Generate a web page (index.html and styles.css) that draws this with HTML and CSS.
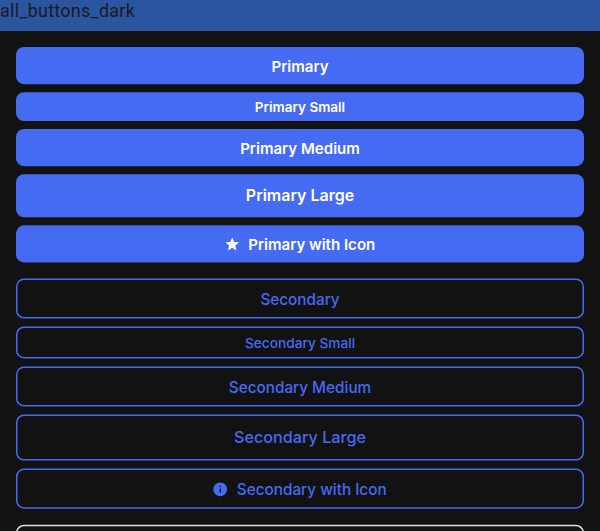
FILE: index.html
```
<!DOCTYPE html>
<html lang="en">
<head>
<meta charset="utf-8">
<title>all_buttons_dark</title>
<link rel="stylesheet" href="styles.css">
</head>
<body>
<header class="title">all_buttons_dark</header>
<main class="list" id="list">
<button class="btn primary medium"><svg class="frame"><rect x="0" y="0" width="568" height="37.15" rx="8"/></svg><span>Primary</span></button>
<button class="btn primary small"><svg class="frame"><rect x="0" y=".15" width="568" height="28.9" rx="8"/></svg><span>Primary Small</span></button>
<button class="btn primary medium"><svg class="frame"><rect x="0" y="0" width="568" height="37.15" rx="8"/></svg><span>Primary Medium</span></button>
<button class="btn primary large"><svg class="frame"><rect x="0" y=".2" width="568" height="43.1" rx="8"/></svg><span>Primary Large</span></button>
<button class="btn primary medium with-icon"><svg class="frame"><rect x="0" y=".3" width="568" height="37.15" rx="8"/></svg><svg class="icon" viewBox="0 0 24 24"><path d="M12 17.27 18.18 21l-1.64-7.03L22 9.24l-7.19-.61L12 2 9.19 8.63 2 9.24l5.46 4.73L5.82 21z"/></svg><span>Primary with Icon</span></button>
<button class="btn secondary medium first"><svg class="frame"><rect x=".75" y="1.15" width="566.5" height="38.6" rx="7.25"/></svg><span>Secondary</span></button>
<button class="btn secondary small"><svg class="frame"><rect x=".75" y="1.25" width="566.5" height="30.4" rx="7.25"/></svg><span>Secondary Small</span></button>
<button class="btn secondary medium"><svg class="frame"><rect x=".75" y="1.15" width="566.5" height="38.6" rx="7.25"/></svg><span>Secondary Medium</span></button>
<button class="btn secondary large"><svg class="frame"><rect x=".75" y="1.25" width="566.5" height="44.6" rx="7.25"/></svg><span>Secondary Large</span></button>
<button class="btn secondary medium with-icon"><svg class="frame"><rect x=".75" y="1.35" width="566.5" height="38.6" rx="7.25"/></svg><svg class="icon" viewBox="0 0 24 24"><path d="M12 2C6.48 2 2 6.48 2 12s4.48 10 10 10 10-4.48 10-10S17.52 2 12 2zm1 15h-2v-6h2v6zm0-8h-2V7h2v2z"/></svg><span>Secondary with Icon</span></button>
<button class="btn outline medium" aria-label="Outline"><svg class="frame"><rect x=".75" y="1.5" width="566.5" height="38.6" rx="7.25"/></svg></button>
</main>
</body>
</html>
```
FILE: styles.css
```
* { box-sizing: border-box; }
html, body { height: 100%; }
body {
  margin: 0;
  overflow: hidden;
  background: #121212;
  font-family: Inter, "Liberation Sans", sans-serif;
}
.title {
  height: 31px;
  background: #2b559f;
  color: #1b1b23;
  font: 400 18px/22px Roboto, sans-serif;
  letter-spacing: .25px;
}
.list {
  display: flex;
  flex-direction: column;
  height: 500px;
  overflow: hidden;
  padding: 16px 16px 0;
}
.btn {
  position: relative;
  display: flex;
  flex: none;
  align-items: center;
  justify-content: center;
  gap: 8px;
  width: 100%;
  padding: 0;
  border: 0;
  background: none;
  font-family: inherit;
  font-size: 15.3px;
  font-weight: 500;
  line-height: 18px;
  white-space: pre;
}
.btn > span, .icon { position: relative; }
.frame {
  position: absolute;
  inset: 0;
  width: 100%;
  height: 100%;
  overflow: visible;
}
.primary { color: #fff; height: 37px; margin-bottom: 8px; padding-top: 3px; font-size: 15.05px; font-weight: 600; }
.primary .frame { fill: #466bf3; }
.primary.small { height: 29px; padding-top: 0; font-size: 13.5px; }
.primary.large { height: 43px; padding: 0 0 1px; font-size: 16px; }
.secondary { color: #466bf3; height: 40px; margin-bottom: 8px; padding-top: 3px; }
.first { margin-top: 8px; }
.secondary .frame { fill: none; stroke: #466bf3; stroke-width: 1.5; }
.secondary.small { height: 32px; padding-top: 2px; font-size: 13.7px; }
.secondary.large { height: 46px; padding-top: 0; font-size: 16.2px; }
.icon { width: 16.5px; height: 16.5px; margin: -1px 0 0 -1px; fill: currentColor; }
.outline { height: 23px; margin-top: 8px; }
.outline .frame { fill: none; stroke: #e0e0e0; stroke-width: 1.5; }
```
